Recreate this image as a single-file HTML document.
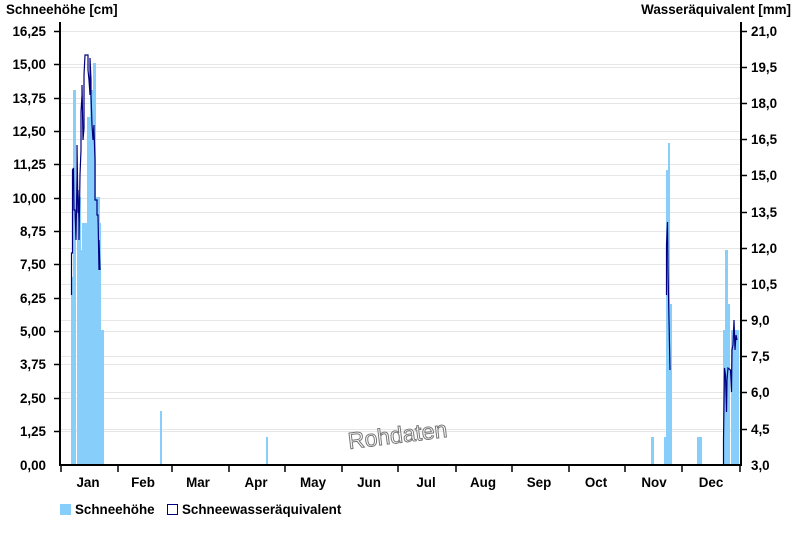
<!DOCTYPE html>
<html><head><meta charset="utf-8"><style>
html,body{margin:0;padding:0;background:#fff;}
svg{display:block;font-family:"Liberation Sans",Arial,sans-serif;font-weight:bold;font-size:13.4px;}
</style></head><body>
<svg width="800" height="550" viewBox="0 0 800 550" xmlns="http://www.w3.org/2000/svg">
<g stroke="#e6e6e6" stroke-width="1">
<line x1="61" x2="740" y1="31.5" y2="31.5"/><line x1="61" x2="740" y1="64.5" y2="64.5"/><line x1="61" x2="740" y1="98.5" y2="98.5"/><line x1="61" x2="740" y1="131.5" y2="131.5"/><line x1="61" x2="740" y1="164.5" y2="164.5"/><line x1="61" x2="740" y1="198.5" y2="198.5"/><line x1="61" x2="740" y1="231.5" y2="231.5"/><line x1="61" x2="740" y1="264.5" y2="264.5"/><line x1="61" x2="740" y1="298.5" y2="298.5"/><line x1="61" x2="740" y1="331.5" y2="331.5"/><line x1="61" x2="740" y1="364.5" y2="364.5"/><line x1="61" x2="740" y1="398.5" y2="398.5"/><line x1="61" x2="740" y1="431.5" y2="431.5"/>
<line x1="61" x2="740" y1="67.5" y2="67.5"/><line x1="61" x2="740" y1="103.5" y2="103.5"/><line x1="61" x2="740" y1="139.5" y2="139.5"/><line x1="61" x2="740" y1="175.5" y2="175.5"/><line x1="61" x2="740" y1="212.5" y2="212.5"/><line x1="61" x2="740" y1="248.5" y2="248.5"/><line x1="61" x2="740" y1="284.5" y2="284.5"/><line x1="61" x2="740" y1="320.5" y2="320.5"/><line x1="61" x2="740" y1="356.5" y2="356.5"/><line x1="61" x2="740" y1="392.5" y2="392.5"/><line x1="61" x2="740" y1="429.5" y2="429.5"/>
</g>
<g fill="#87cefa">
<rect x="71" y="277" width="2" height="188"/><rect x="73" y="90" width="3" height="375"/>
<rect x="77" y="197" width="4" height="268"/><rect x="81" y="250" width="1" height="215"/>
<rect x="82" y="223" width="5" height="242"/><rect x="87" y="117" width="3" height="348"/>
<rect x="90" y="90" width="3" height="375"/><rect x="93" y="63" width="3" height="402"/>
<rect x="96" y="197" width="4" height="268"/><rect x="100" y="223" width="1" height="242"/>
<rect x="101" y="330" width="3" height="135"/>
<rect x="160" y="411" width="2" height="54"/><rect x="266" y="437" width="2" height="28"/>
<rect x="651" y="437" width="3" height="28"/><rect x="664" y="437" width="2" height="28"/>
<rect x="666" y="170" width="2" height="295"/><rect x="668" y="143" width="2" height="322"/>
<rect x="670" y="304" width="2" height="161"/>
<rect x="697" y="437" width="5" height="28"/>
<rect x="723" y="330" width="2" height="135"/><rect x="725" y="250" width="3" height="215"/>
<rect x="728" y="304" width="2" height="161"/><rect x="731" y="330" width="8" height="135"/>
</g>
<g fill="none" stroke="#000080" stroke-width="1.2">
<polyline points="71.5,295 71.5,253 72.5,253 72.5,170 73.5,168 74,210 75,210 76,240 77,175 77,145 78,213 78,190 79,222 79,240 80,175 81,150 81,112 82,95 82,85 83,140 84,128 84,75 85,55 88,55 88,70 89,80 90,95 90,58 91,80 91,95 92,125 93,140 94,125 94,130 95,160 95,200 96,200 97,200 97,215 98,215 99,270 99,240 100,270"/>
<polyline points="666.5,295 666.5,245 667.5,222 668,270 669,320 670,370"/>
<polyline points="723.5,465 723.5,440 724.5,368 725.5,375 726.5,412 727,380 728,368 730.5,370 731.5,392 732,350 733,345 734,320 735,350 736,335 737,340"/>
</g>
<g stroke="#000" stroke-width="2" fill="none">
<line x1="60" y1="22" x2="60" y2="466"/><line x1="741" y1="22" x2="741" y2="466"/>
<line x1="59" y1="465" x2="742" y2="465"/>
</g>
<g stroke="#000" stroke-width="1.5">
<line x1="54" x2="60" y1="31.5" y2="31.5"/><line x1="54" x2="60" y1="64.5" y2="64.5"/><line x1="54" x2="60" y1="98.5" y2="98.5"/><line x1="54" x2="60" y1="131.5" y2="131.5"/><line x1="54" x2="60" y1="164.5" y2="164.5"/><line x1="54" x2="60" y1="198.5" y2="198.5"/><line x1="54" x2="60" y1="231.5" y2="231.5"/><line x1="54" x2="60" y1="264.5" y2="264.5"/><line x1="54" x2="60" y1="298.5" y2="298.5"/><line x1="54" x2="60" y1="331.5" y2="331.5"/><line x1="54" x2="60" y1="364.5" y2="364.5"/><line x1="54" x2="60" y1="398.5" y2="398.5"/><line x1="54" x2="60" y1="431.5" y2="431.5"/>
<line x1="741" x2="747" y1="31.5" y2="31.5"/><line x1="741" x2="747" y1="67.5" y2="67.5"/><line x1="741" x2="747" y1="103.5" y2="103.5"/><line x1="741" x2="747" y1="139.5" y2="139.5"/><line x1="741" x2="747" y1="175.5" y2="175.5"/><line x1="741" x2="747" y1="212.5" y2="212.5"/><line x1="741" x2="747" y1="248.5" y2="248.5"/><line x1="741" x2="747" y1="284.5" y2="284.5"/><line x1="741" x2="747" y1="320.5" y2="320.5"/><line x1="741" x2="747" y1="356.5" y2="356.5"/><line x1="741" x2="747" y1="392.5" y2="392.5"/><line x1="741" x2="747" y1="429.5" y2="429.5"/>
<line y1="465" y2="472" x1="61" x2="61"/><line y1="465" y2="472" x1="118" x2="118"/><line y1="465" y2="472" x1="172" x2="172"/><line y1="465" y2="472" x1="229" x2="229"/><line y1="465" y2="472" x1="285" x2="285"/><line y1="465" y2="472" x1="342" x2="342"/><line y1="465" y2="472" x1="398" x2="398"/><line y1="465" y2="472" x1="456" x2="456"/><line y1="465" y2="472" x1="512" x2="512"/><line y1="465" y2="472" x1="569" x2="569"/><line y1="465" y2="472" x1="625" x2="625"/><line y1="465" y2="472" x1="682" x2="682"/><line y1="465" y2="472" x1="740" x2="740"/>
</g>
<g fill="#000" text-anchor="end">
<text x="46" y="36">16,25</text><text x="46" y="69">15,00</text><text x="46" y="103">13,75</text><text x="46" y="136">12,50</text><text x="46" y="169">11,25</text><text x="46" y="203">10,00</text><text x="46" y="236">8,75</text><text x="46" y="269">7,50</text><text x="46" y="303">6,25</text><text x="46" y="336">5,00</text><text x="46" y="369">3,75</text><text x="46" y="403">2,50</text><text x="46" y="436">1,25</text><text x="46" y="470">0,00</text>
</g>
<g fill="#000">
<text x="751" y="36">21,0</text><text x="751" y="72">19,5</text><text x="751" y="108">18,0</text><text x="751" y="144">16,5</text><text x="751" y="180">15,0</text><text x="751" y="217">13,5</text><text x="751" y="253">12,0</text><text x="751" y="289">10,5</text><text x="751" y="325">9,0</text><text x="751" y="361">7,5</text><text x="751" y="397">6,0</text><text x="751" y="434">4,5</text><text x="751" y="470">3,0</text>
<text x="6" y="14">Schneehöhe [cm]</text>
<text x="791" y="14" text-anchor="end">Wasseräquivalent [mm]</text>
</g>
<g fill="#000" text-anchor="middle">
<text x="88" y="487">Jan</text><text x="143" y="487">Feb</text><text x="198" y="487">Mar</text><text x="256" y="487">Apr</text><text x="313" y="487">May</text><text x="369" y="487">Jun</text><text x="426" y="487">Jul</text><text x="483" y="487">Aug</text><text x="539" y="487">Sep</text><text x="596" y="487">Oct</text><text x="654" y="487">Nov</text><text x="711" y="487">Dec</text>
</g>
<rect x="60" y="504" width="11" height="11" fill="#87cefa"/>
<text x="75" y="514" fill="#000">Schneehöhe</text>
<rect x="167.5" y="504.5" width="10" height="10" fill="#fff" stroke="#000080"/>
<text x="182" y="514" fill="#000">Schneewasseräquivalent</text>
<text x="349" y="449" transform="rotate(-7 349 449)" font-size="23" font-weight="normal" fill="#fff" stroke="#777" stroke-width="1">Rohdaten</text>
</svg>
</body></html>
